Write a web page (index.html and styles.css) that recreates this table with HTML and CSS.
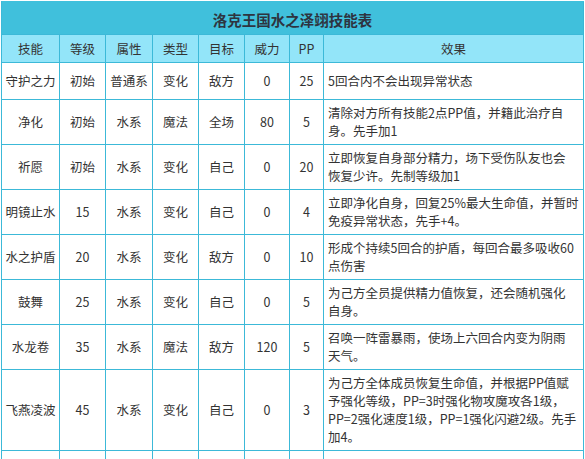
FILE: index.html
```html
<!DOCTYPE html>
<html lang="zh-CN">
<head>
<meta charset="utf-8">
<title>洛克王国水之泽翊技能表</title>
<link rel="stylesheet" href="styles.css">
</head>
<body>
<div class="wrap">
<table class="skills">
  <colgroup>
    <col class="c-name"><col class="c-lv"><col class="c-attr"><col class="c-type"><col class="c-target"><col class="c-power"><col class="c-pp"><col class="c-effect">
  </colgroup>
  <tr class="title-row"><th colspan="8" class="title">洛克王国水之泽翊技能表</th></tr>
  <tr class="head-row">
    <th>技能</th><th>等级</th><th>属性</th><th>类型</th><th>目标</th><th>威力</th><th>PP</th><th>效果</th>
  </tr>
  <tr class="first-row">
    <td>守护之力</td><td>初始</td><td>普通系</td><td>变化</td><td>敌方</td><td>0</td><td>25</td>
    <td class="effect">5回合内不会出现异常状态</td>
  </tr>
  <tr>
    <td>净化</td><td>初始</td><td>水系</td><td>魔法</td><td>全场</td><td>80</td><td>5</td>
    <td class="effect">清除对方所有技能2点PP值，并籍此治疗自<br>身。先手加1</td>
  </tr>
  <tr>
    <td>祈愿</td><td>初始</td><td>水系</td><td>变化</td><td>自己</td><td>0</td><td>20</td>
    <td class="effect">立即恢复自身部分精力，场下受伤队友也会<br>恢复少许。先制等级加1</td>
  </tr>
  <tr>
    <td>明镜止水</td><td>15</td><td>水系</td><td>变化</td><td>自己</td><td>0</td><td>4</td>
    <td class="effect">立即净化自身，回复25%最大生命值，并暂时<br>免疫异常状态，先手+4。</td>
  </tr>
  <tr>
    <td>水之护盾</td><td>20</td><td>水系</td><td>变化</td><td>敌方</td><td>0</td><td>10</td>
    <td class="effect">形成个持续5回合的护盾，每回合最多吸收60<br>点伤害</td>
  </tr>
  <tr>
    <td>鼓舞</td><td>25</td><td>水系</td><td>变化</td><td>自己</td><td>0</td><td>5</td>
    <td class="effect">为己方全员提供精力值恢复，还会随机强化<br>自身。</td>
  </tr>
  <tr>
    <td>水龙卷</td><td>35</td><td>水系</td><td>魔法</td><td>敌方</td><td>120</td><td>5</td>
    <td class="effect">召唤一阵雷暴雨，使场上六回合内变为阴雨<br>天气。</td>
  </tr>
  <tr>
    <td>飞燕凌波</td><td>45</td><td>水系</td><td>变化</td><td>自己</td><td>0</td><td>3</td>
    <td class="effect">为己方全体成员恢复生命值，并根据PP值赋<br>予强化等级，PP=3时强化物攻魔攻各1级，<br>PP=2强化速度1级，PP=1强化闪避2级。先手<br>加4。</td>
  </tr>
  <tr class="empty-row">
    <td></td><td></td><td></td><td></td><td></td><td></td><td></td><td class="effect"></td>
  </tr>
</table>
</div>
</body>
</html>
```
FILE: styles.css
```css
html, body {
  margin: 0;
  padding: 0;
  background: #ffffff;
}

.wrap {
  padding: 1px 0 0 1px;
}

.skills {
  box-sizing: border-box;
  width: 583px;
  table-layout: fixed;
  border-collapse: separate;
  border-spacing: 0;
  border-left: 1px solid #3cb9d8;
  border-top: 1px solid #40c0dc;
  font-family: "Noto Sans CJK SC", "Noto Sans", sans-serif;
  font-size: 12.5px;
  line-height: 18px;
  color: #333333;
}

.c-name { width: 58px; }
.c-lv { width: 46px; }
.c-attr { width: 47px; }
.c-type { width: 46px; }
.c-target { width: 46px; }
.c-power { width: 45px; }
.c-pp { width: 34px; }
.c-effect { width: 260px; }

.skills th,
.skills td {
  box-sizing: border-box;
  border-right: 1px solid #3cb9d8;
  border-bottom: 1px solid #3cb9d8;
  padding: 4px 0;
  text-align: center;
  vertical-align: middle;
  font-weight: normal;
  white-space: nowrap;
  overflow: hidden;
}

.skills .title {
  background: #40c0dc;
  border-right-color: #3ab6d4;
  font-size: 14.5px;
  font-weight: bold;
  color: #2e3440;
  padding: 3px 0 0;
}

.title-row { height: 33px; }

.head-row { height: 28px; }

.head-row th {
  background: #93e5f9;
  padding: 0;
}

.first-row { height: 37px; }

.empty-row { height: 45px; }

.skills .effect {
  text-align: left;
  padding: 4px 4px 4px 4px;
}
```
